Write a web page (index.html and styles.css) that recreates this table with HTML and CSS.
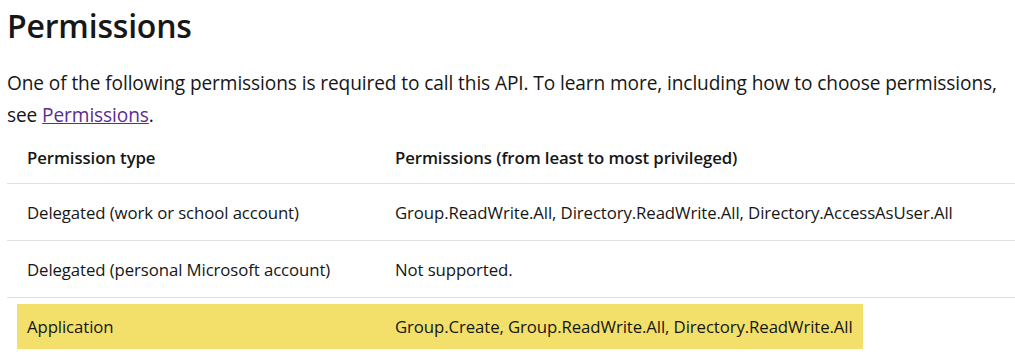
FILE: index.html
```html
<!DOCTYPE html>
<html lang="en">
<head>
    <meta charset="UTF-8">
    <meta name="viewport" content="width=device-width, initial-scale=1.0">
    <title>Permissions</title>
    <link rel="stylesheet" href="styles.css">
</head>
<body>
    <div class="content">
        <h1>Permissions</h1>
        <p class="intro">One of the following permissions is required to call this API. To learn more, including how to choose permissions, see <a href="#" class="link">Permissions</a>.</p>

        <div class="perm-table">
            <div class="row head">
                <div class="cell">Permission type</div>
                <div class="cell">Permissions (from least to most privileged)</div>
            </div>
            <div class="row">
                <div class="cell">Delegated (work or school account)</div>
                <div class="cell">Group.ReadWrite.All, Directory.ReadWrite.All, Directory.AccessAsUser.All</div>
            </div>
            <div class="row">
                <div class="cell">Delegated (personal Microsoft account)</div>
                <div class="cell">Not supported.</div>
            </div>
            <div class="row last">
                <div class="highlight">
                    <div class="cell">Application</div>
                    <div class="cell">Group.Create, Group.ReadWrite.All, Directory.ReadWrite.All</div>
                </div>
            </div>
        </div>
    </div>
</body>
</html>
```

FILE: styles.css
```css
* {
    margin: 0;
    padding: 0;
    box-sizing: border-box;
}

body {
    font-family: 'Segoe UI', 'Open Sans', sans-serif;
    color: #161616;
    background: #fff;
    overflow: hidden;
}

.content {
    padding: 6px 0 0 7px;
}

h1 {
    font-size: 32px;
    font-weight: 600;
    line-height: 40px;
    color: #171717;
    letter-spacing: -0.2px;
}

.intro {
    margin-top: 21px;
    font-size: 19.1px;
    line-height: 32px;
    letter-spacing: -0.1px;
}

.link {
    color: #5c2d91;
    text-decoration: underline;
}

.perm-table {
    margin-top: 0;
    font-size: 16.8px;
    letter-spacing: -0.1px;
}

.row {
    display: grid;
    grid-template-columns: 388px 1fr;
    align-items: center;
    height: 57px;
    border-bottom: 1px solid #e1e1e1;
}

.row .cell:first-child {
    padding-left: 20px;
}

.row.head {
    height: 53px;
    font-weight: 600;
}

.row.last {
    display: block;
    border-bottom: none;
    padding: 6px 0 0 10px;
}

.highlight {
    display: grid;
    grid-template-columns: 378px auto;
    align-items: center;
    width: fit-content;
    height: 45px;
    padding-right: 10px;
    background: #f2e06b;
}

.highlight .cell:first-child {
    padding-left: 10px;
}
```
